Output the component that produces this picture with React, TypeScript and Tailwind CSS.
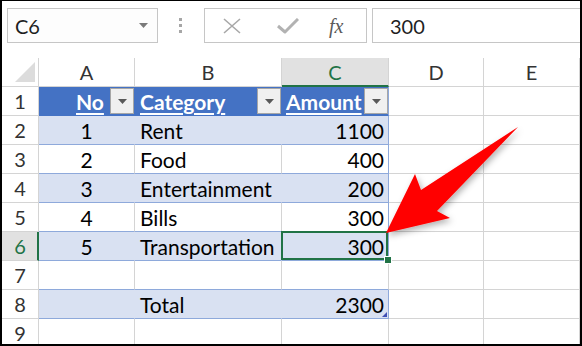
import type { ReactNode } from 'react';

const FONT = "font-['Lato','Liberation_Sans',sans-serif]";

type RowKind = 'head' | 'band' | 'plain' | 'empty' | 'gap';

interface SheetRow {
  num: string;
  kind: RowKind;
  a: ReactNode;
  b: ReactNode;
  c: ReactNode;
}

function FilterButton() {
  return (
    <span className="absolute right-0 top-[1px] w-[24px] h-[26px] bg-[#f0f0f0] border border-[#a6a6a6] flex items-center justify-center">
      <svg width="9" height="5" viewBox="0 0 9 5">
        <polygon points="0,0 9,0 4.5,5" fill="#595959" />
      </svg>
    </span>
  );
}

const rows: SheetRow[] = [
  {
    num: '1',
    kind: 'head',
    a: <span className="pl-[37px] font-bold underline underline-offset-[3px]">No</span>,
    b: <span className="pl-[5px] font-bold underline underline-offset-[3px]">Category</span>,
    c: <span className="pl-[4px] font-bold underline underline-offset-[3px]">Amount</span>,
  },
  { num: '2', kind: 'band', a: '1', b: 'Rent', c: '1100' },
  { num: '3', kind: 'plain', a: '2', b: 'Food', c: '400' },
  { num: '4', kind: 'band', a: '3', b: 'Entertainment', c: '200' },
  { num: '5', kind: 'plain', a: '4', b: 'Bills', c: '300' },
  { num: '6', kind: 'band', a: '5', b: 'Transportation', c: '300' },
  { num: '7', kind: 'gap', a: '', b: '', c: '' },
  { num: '8', kind: 'band', a: '', b: 'Total', c: '2300' },
  { num: '9', kind: 'empty', a: '', b: '', c: '' },
];

function cellClass(kind: RowKind, col: 'a' | 'b' | 'c') {
  if (kind === 'head') {
    return col === 'c'
      ? 'bg-[#4472C4] border-r border-b border-r-[#8EA9DB] border-b-[#4472C4] text-white'
      : 'bg-[#4472C4] border-r border-b border-[#4472C4] text-white';
  }
  if (kind === 'band') {
    return col === 'c'
      ? 'bg-[#D9E1F2] border-r border-b border-[#8EA9DB]'
      : 'bg-[#D9E1F2] border-r border-b border-r-[#D9E1F2] border-b-[#8EA9DB]';
  }
  if (kind === 'plain') {
    return col === 'c'
      ? 'bg-white border-r border-b border-[#8EA9DB]'
      : 'bg-white border-r border-b border-r-[#d4d4d4] border-b-[#8EA9DB]';
  }
  if (kind === 'gap') {
    return 'bg-white border-r border-b border-r-[#d4d4d4] border-b-[#8EA9DB]';
  }
  return 'bg-white border-r border-b border-[#d4d4d4]';
}

function FormulaBar() {
  return (
    <div className="h-[57px] flex items-start pt-[7px] pl-[5px]">
      {/* name box */}
      <div className="w-[151px] h-[35px] border border-[#c6c6c6] bg-[#fdfdfd] flex items-center pl-[7px] pr-[9px] justify-between">
        <span className="text-[20px] text-[#1f1f1f]">C6</span>
        <svg width="9" height="5" viewBox="0 0 9 5">
          <polygon points="0,0 9,0 4.5,5" fill="#7a7a7a" />
        </svg>
      </div>
      {/* grip dots */}
      <div className="ml-[21px] mt-[10px] flex flex-col gap-[3px]">
        <span className="w-[3px] h-[3px] bg-[#a6a6a6]" />
        <span className="w-[3px] h-[3px] bg-[#a6a6a6]" />
        <span className="w-[3px] h-[3px] bg-[#a6a6a6]" />
      </div>
      {/* cancel / enter / fx */}
      <div className="ml-[22px] w-[163px] h-[35px] border border-[#c6c6c6] bg-white flex items-center">
        <svg className="ml-[18px]" width="18" height="16" viewBox="0 0 18 16">
          <path d="M1 1 L17 15 M17 1 L1 15" stroke="#a8a8a8" strokeWidth="1.6" fill="none" />
        </svg>
        <svg className="ml-[36px]" width="22" height="16" viewBox="0 0 22 16">
          <path d="M1 8 L8 14 L21 1" stroke="#b2b2b2" strokeWidth="3" fill="none" strokeLinejoin="round" />
        </svg>
        <span className="ml-[30px] font-['Liberation_Serif',serif] italic text-[20px] text-[#5a5a5a] leading-none">
          fx
        </span>
      </div>
      {/* formula input */}
      <div className="ml-[5px] flex-1 h-[35px] border border-r-0 border-[#c6c6c6] bg-white flex items-center pl-[17px]">
        <span className="text-[20px] text-[#1f1f1f]">300</span>
      </div>
    </div>
  );
}

const colHeads = ['A', 'B', 'C', 'D', 'E'];

export default function App() {
  return (
    <div
      className={`relative w-[582px] h-[346px] overflow-hidden bg-white border-black border-t border-x-2 border-b-2 ${FONT}`}
    >
      <FormulaBar />

      <div className="grid grid-cols-[37px_96px_147px_107px_95px_96px] auto-rows-[29px] text-[20px] leading-none">
        {/* column header row */}
        <div className="border-r border-b border-[#d4d4d4] relative">
          <svg className="absolute left-[13px] top-[4px]" width="20" height="20" viewBox="0 0 20 20">
            <polygon points="20,0 20,20 0,20" fill="#dcdcdc" />
          </svg>
        </div>
        {colHeads.map((h) =>
          h === 'C' ? (
            <div
              key={h}
              className="bg-[#e1e1e1] border-r border-[#d4d4d4] border-b-2 border-b-[#217346] text-[#217346] flex items-center justify-center pt-[1px]"
            >
              {h}
            </div>
          ) : (
            <div
              key={h}
              className="border-r border-b border-[#d4d4d4] text-[#333] flex items-center justify-center"
            >
              {h}
            </div>
          ),
        )}

        {rows.map((r) => {
          const selectedRow = r.num === '6';
          return [
            <div
              key={`h${r.num}`}
              className={
                selectedRow
                  ? 'bg-[#e1e1e1] border-b border-b-[#d4d4d4] border-r-2 border-r-[#217346] text-[#217346] flex items-center justify-center pl-[1px]'
                  : 'border-r border-b border-[#d4d4d4] text-[#333] flex items-center justify-center'
              }
            >
              {r.num}
            </div>,
            <div
              key={`a${r.num}`}
              className={`relative flex items-center text-[21px] ${r.kind === 'head' ? 'justify-start' : 'justify-center'} ${cellClass(r.kind, 'a')}`}
            >
              {r.a}
              {r.kind === 'head' && <FilterButton />}
            </div>,
            <div key={`b${r.num}`} className={`relative flex items-center text-[21px] ${r.kind === 'head' ? '' : 'pl-[5px]'} ${cellClass(r.kind, 'b')}`}>
              {r.b}
              {r.kind === 'head' && <FilterButton />}
            </div>,
            <div
              key={`c${r.num}`}
              className={`relative flex items-center text-[21px] ${r.kind === 'head' ? 'justify-start' : 'justify-end pr-[4px]'} ${cellClass(r.kind, 'c')}`}
            >
              {r.c}
              {r.kind === 'head' && <FilterButton />}
              {selectedRow && (
                <>
                  <span className="absolute left-[-1px] top-[-1px] right-0 bottom-0 border-2 border-[#217346] z-10" />
                  <span className="absolute left-[103px] top-[25px] w-[6px] h-[6px] bg-[#217346] outline outline-1 outline-white z-20" />
                </>
              )}
              {r.num === '8' && (
                <svg className="absolute left-[100px] top-[22px]" width="5" height="5" viewBox="0 0 5 5">
                  <polygon points="5,0 5,5 0,5" fill="#3f4fb5" />
                </svg>
              )}
            </div>,
            <div key={`d${r.num}`} className="border-r border-b border-[#d4d4d4]" />,
            <div key={`e${r.num}`} className="border-r border-b border-[#d4d4d4]" />,
          ];
        })}
      </div>

      {/* red annotation arrow */}
      <svg
        className="absolute left-[-2px] top-[-1px] pointer-events-none z-30"
        width="582"
        height="346"
        viewBox="0 0 582 346"
      >
        <defs>
          <filter id="arrowShadow" x="-20%" y="-20%" width="140%" height="140%">
            <feDropShadow dx="2" dy="3" stdDeviation="3" floodColor="#000" floodOpacity="0.3" />
          </filter>
        </defs>
        <polygon
          points="386,233 415,174 421,190 518,127 437,211 450,218"
          fill="#ff0000"
          filter="url(#arrowShadow)"
        />
      </svg>
    </div>
  );
}
